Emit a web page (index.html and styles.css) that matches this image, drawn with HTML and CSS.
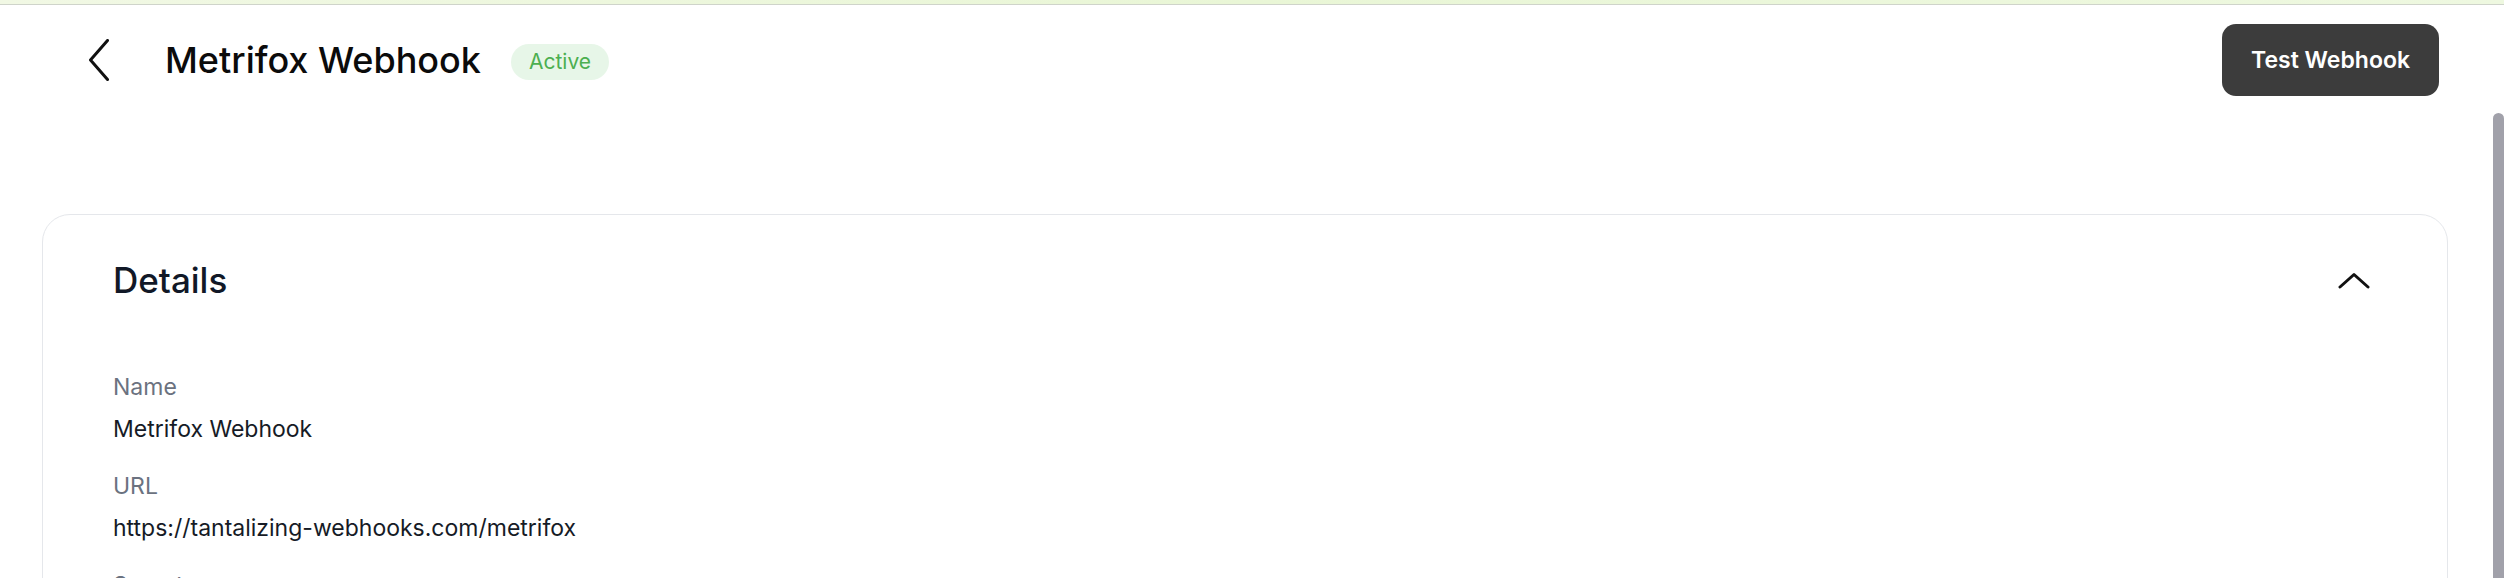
FILE: index.html
```html
<!DOCTYPE html>
<html lang="en">
<head>
    <meta charset="UTF-8">
    <meta name="viewport" content="width=device-width, initial-scale=1.0">
    <title>Metrifox Webhook</title>
    <link rel="stylesheet" href="styles.css">
</head>
<body>

<div class="top-strip"></div>

<!-- 페이지 헤더 -->
<div class="page-header">
    <div class="header-left">
        <button class="back-button" aria-label="Back">
            <svg width="22" height="42" viewBox="0 0 22 42">
                <path d="M19.5 1.5 L2.5 21 L19.5 40.5" fill="none" stroke="#111" stroke-width="3" stroke-linecap="round" stroke-linejoin="round"/>
            </svg>
        </button>
        <h1 class="page-title">Metrifox Webhook</h1>
        <span class="status-badge">Active</span>
    </div>
    <button class="test-button">Test Webhook</button>
</div>

<!-- 상세 정보 카드 -->
<div class="details-card">
    <div class="card-head">
        <h2 class="card-title">Details</h2>
        <button class="collapse-button" aria-label="Collapse">
            <svg width="32" height="17" viewBox="0 0 32 17">
                <path d="M2 15 L16 2.5 L30 15" fill="none" stroke="#111" stroke-width="3" stroke-linecap="round" stroke-linejoin="round"/>
            </svg>
        </button>
    </div>

    <div class="field">
        <div class="field-label">Name</div>
        <div class="field-value">Metrifox Webhook</div>
    </div>
    <div class="field">
        <div class="field-label">URL</div>
        <div class="field-value">https://tantalizing-webhooks.com/metrifox</div>
    </div>
    <div class="field">
        <div class="field-label">Secret</div>
        <div class="field-value">whsec_••••••••••••••••</div>
    </div>
</div>

<div class="scroll-thumb"></div>

</body>
</html>
```

FILE: styles.css
```css
body {
    margin: 0;
    padding: 0;
    background-color: #fff;
    color: #111827;
    font-family: Inter, "Liberation Sans", sans-serif;
    overflow: hidden;
}
button {
    font-family: inherit;
    border: none;
    background: none;
    padding: 0;
    cursor: pointer;
}
.top-strip {
    height: 4px;
    background: linear-gradient(90deg, #f1f8e4, #e9f6d6 50%, #eef8e0);
    border-bottom: 1px solid #cfd4ca;
}
.page-header {
    display: flex;
    justify-content: space-between;
    align-items: center;
    padding: 19px 65px 0 88px;
}
.header-left {
    display: flex;
    align-items: center;
}
.back-button {
    display: flex;
    width: 22px;
    height: 42px;
    margin-right: 55px;
}
.page-title {
    margin: 0;
    font-size: 36px;
    font-weight: 500;
    line-height: 44px;
    color: #0b0b0b;
}
.status-badge {
    margin-left: 30px;
    margin-top: 4px;
    padding: 0 18px;
    height: 36px;
    line-height: 36px;
    border-radius: 18px;
    background-color: #e7f6e8;
    color: #4caf50;
    font-size: 21px;
}
.test-button {
    height: 72px;
    padding: 0 29px;
    border-radius: 14px;
    background-color: #3c3c3c;
    color: #fff;
    font-size: 23px;
    font-weight: 600;
}
.details-card {
    margin: 118px 56px 0 42px;
    padding: 43px 77px 40px 70px;
    border: 1px solid #e5e7eb;
    border-radius: 28px;
}
.card-head {
    display: flex;
    justify-content: space-between;
    align-items: center;
    margin-bottom: 71px;
}
.card-title {
    margin: 0;
    font-size: 35px;
    font-weight: 500;
    line-height: 44px;
    color: #111827;
}
.collapse-button {
    display: flex;
    width: 32px;
    height: 17px;
}
.field {
    margin-bottom: 28px;
}
.field-label {
    font-size: 23px;
    line-height: 28px;
    color: #6b7280;
    margin-bottom: 13px;
}
.field-value {
    font-size: 23px;
    line-height: 30px;
    color: #161b26;
}
.scroll-thumb {
    position: fixed;
    top: 113px;
    right: 0;
    bottom: 0;
    width: 11px;
    background-color: #a1a1aa;
    border-radius: 6px 6px 0 0;
}
```
